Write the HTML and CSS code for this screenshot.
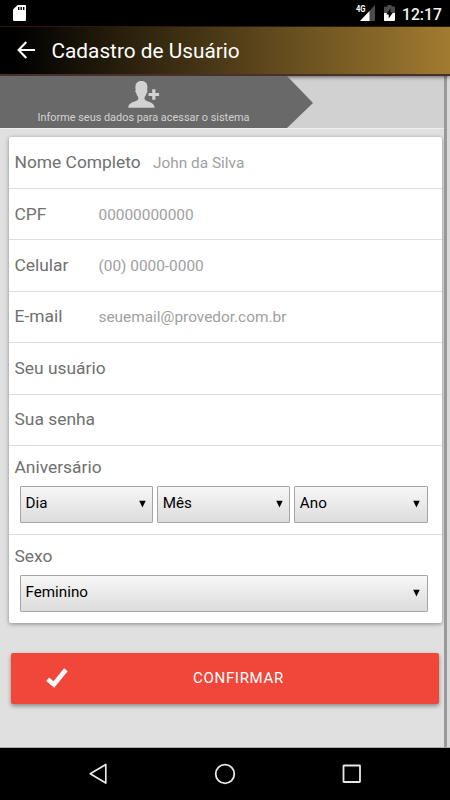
FILE: index.html
```html
<!DOCTYPE html>
<html lang="pt-BR">
<head>
<meta charset="utf-8">
<meta name="viewport" content="width=device-width, initial-scale=1">
<title>Cadastro de Usuário</title>
<link rel="stylesheet" href="styles.css">
</head>
<body>
<div class="phone">
  <div class="status">
    <svg class="sd" width="13" height="16" viewBox="0 0 13 16"><path fill="#fff" d="M4.600 0H12a1 1 0 0 1 1 1v14a1 1 0 0 1-1 1H1a1 1 0 0 1-1-1V4.600z"/><path fill="#000" d="M5 2h1.400v3H5zM7.500 2h1.400v3H7.500zM10 2h1.400v3H10z"/></svg>
    <svg class="signal" width="20" height="17" viewBox="0 0 20 17"><path fill="#4b4b4b" d="M19 1v16H4z"/><path fill="#fff" d="M13.500 6.900V17H4z"/><text class="network" x="0" y="8" textLength="9.500" lengthAdjust="spacingAndGlyphs">4G</text></svg>
    <svg class="battery" width="12" height="16" viewBox="0 0 12 16"><path fill="#4b4b4b" d="M3.500 0h4v1.500H10a1 1 0 0 1 1 1V8H0V2.500a1 1 0 0 1 1-1h2.500z"/><path fill="#fff" d="M0 8h11v7a1 1 0 0 1-1 1H1a1 1 0 0 1-1-1z"/><path fill="#000" d="M6.500 3.500v4H9L4.700 13.500v-4H2.200z"/></svg>
    <span class="clock">12:17</span>
  </div>

  <header class="toolbar">
    <svg class="back" width="18" height="18" viewBox="0 0 18 18"><path fill="none" stroke="#fff" stroke-width="2.100" d="M9.300 1L1.600 9l7.700 8M1.600 9H18"/></svg>
    <h1 class="title">Cadastro de Usuário</h1>
  </header>

  <main class="page">
    <div class="content">
      <div class="steps">
        <div class="step">
          <svg class="user-plus" width="32" height="27" viewBox="0 0 32 27"><path fill="#d2d2d2" d="M13.400 0c4 0 6 2.400 6 6 0 1.200-.1 2-.3 2.900.7.700.4 2.300-.5 3-.4 1.800-1.100 3.100-2 4v2.600c.7 1.700 9.900 2.800 9.900 7.500v.8H.3V26c0-4.700 9.200-5.800 9.900-7.500v-2.600c-.9-.9-1.600-2.200-2-4-.9-.7-1.200-2.300-.5-3A14 14 0 0 1 7.400 6c0-3.600 2-6 6-6z"/><path fill="#d2d2d2" d="M24.200 8.200h3.200v3.700h3.700v3.200h-3.700v3.700h-3.200v-3.700h-3.700v-3.200h3.700z"/></svg>
          <span class="step-text">Informe seus dados para acessar o sistema</span>
        </div>
      </div>

      <form class="card">
        <div class="row"><span class="label label-name">Nome Completo</span><span class="hint">John da Silva</span></div>
        <div class="row"><span class="label">CPF</span><span class="hint">00000000000</span></div>
        <div class="row"><span class="label">Celular</span><span class="hint">(00) 0000-0000</span></div>
        <div class="row"><span class="label">E-mail</span><span class="hint">seuemail@provedor.com.br</span></div>
        <div class="row"><span class="label">Seu usuário</span></div>
        <div class="row"><span class="label">Sua senha</span></div>
        <div class="group birthday">
          <span class="label">Aniversário</span>
          <div class="selects">
            <div class="select"><span>Dia</span><svg width="7" height="8" viewBox="0 0 7 8"><path d="M.2.700h6.500L3.450 7.400z"/></svg></div>
            <div class="select"><span>Mês</span><svg width="7" height="8" viewBox="0 0 7 8"><path d="M.2.700h6.500L3.450 7.400z"/></svg></div>
            <div class="select"><span>Ano</span><svg width="7" height="8" viewBox="0 0 7 8"><path d="M.2.700h6.500L3.450 7.400z"/></svg></div>
          </div>
        </div>
        <div class="group">
          <span class="label">Sexo</span>
          <div class="selects">
            <div class="select"><span>Feminino</span><svg width="7" height="8" viewBox="0 0 7 8"><path d="M.2.700h6.500L3.450 7.400z"/></svg></div>
          </div>
        </div>
      </form>

      <div class="confirm">
        <svg class="check" width="22" height="20" viewBox="0 0 22 20"><path fill="none" stroke="#fff" stroke-width="4.600" d="M1.700 11.200l6.200 5.200L19.900 1.700"/></svg>
        <span class="confirm-text">CONFIRMAR</span>
      </div>
    </div>
    <div class="scrollbar"></div>
  </main>

  <nav class="nav">
    <svg width="18" height="22" viewBox="0 0 18 22"><path fill="none" stroke="#e8e8e8" stroke-width="1.700" stroke-linejoin="round" d="M16.800 1.500v18.600L1.200 10.800z"/></svg>
    <svg width="22" height="22" viewBox="0 0 22 22"><circle cx="11" cy="11" r="9.300" fill="none" stroke="#e8e8e8" stroke-width="1.800"/></svg>
    <svg width="20" height="20" viewBox="0 0 20 20"><rect x="1.500" y="1.500" width="16.500" height="16.500" rx=".5" fill="none" stroke="#e8e8e8" stroke-width="1.800"/></svg>
  </nav>
</div>
</body>
</html>
```

FILE: styles.css
```css
* { box-sizing: border-box; }
body { margin: 0; font-family: Roboto, "Liberation Sans", sans-serif; }
svg { display: block; flex: none; }
.phone { width: 450px; height: 800px; display: flex; flex-direction: column; overflow: hidden; background: #000; }

.status { height: 26px; flex: none; display: flex; align-items: flex-start; background: #000; }
.sd { margin: 5px 0 0 13px; }
.signal { margin: 4px 0 0 330px; }
.network { font: 700 9px Roboto, sans-serif; fill: #fff; }
.battery { margin: 5px 0 0 8px; }
.clock { margin: 5px 0 0 6px; font-size: 15.700px; line-height: 19px; font-weight: 500; color: #f4f4f4; }

.toolbar { height: 50px; flex: none; display: flex; align-items: center; padding-left: 17px; border-top: 1px solid #2d1710; border-bottom: 2px solid #49302c; background: linear-gradient(90deg, #000 3%, #a17b30); box-shadow: 0 1px 4px rgba(0,0,0,.55); position: relative; }
.back { margin-bottom: 1px; }
.title { margin: 0 0 0 16.500px; font-size: 20.800px; line-height: 24px; font-weight: 400; color: #fff; white-space: nowrap; }

.page { flex: 1; min-height: 0; display: flex; background: #e0e0e0; border-bottom: 1px solid #aaa; }
.content { width: 444px; flex: none; }
.scrollbar { flex: 1; border-left: 3px solid #999; background: #dadada; }
.steps { height: 53px; background: #d1d1d1; border-bottom: 1px solid #eee; }
.step { width: 313px; height: 52px; padding: 5px 26px 0 0; display: flex; flex-direction: column; align-items: center; background: #696969; clip-path: polygon(0 0, 287px 0, 313px 27px, 287px 100%, 0 100%); }
.step-text { margin-top: 3px; font-size: 10.900px; line-height: 13px; color: #d2d2d2; white-space: nowrap; }

.card { width: 433px; height: 485.500px; margin: 8px 0 0 9px; padding-top: .7px; background: #fff; border-radius: 2px; box-shadow: 0 1px 4px rgba(0,0,0,.4); }
.row { height: 51.400px; padding: 0 0 1.400px 5.500px; display: flex; align-items: center; border-bottom: 1px solid #dedede; }
.label { width: 84px; font-size: 17.400px; line-height: 20px; color: #707070; white-space: nowrap; }
.label-name { width: 138.500px; }
.hint { padding-top: 2px; font-size: 15.400px; line-height: 18px; color: #a0a0a0; white-space: nowrap; }
.group { height: 88px; padding: 10.700px 14.500px 0 5.500px; }
.birthday { height: 89px; border-bottom: 1px solid #dedede; }
.group .label { display: block; }
.selects { display: flex; gap: 3.500px; margin: 9.300px 0 0 5px; }
.select { flex: 1; height: 37px; padding: 0 6.500px 0 5px; display: flex; align-items: center; justify-content: space-between; border: 1px solid #a5a5a5; border-radius: 1px; background: linear-gradient(#f7f7f7, #dcdcdc); font-size: 15.200px; line-height: 18px; color: #000; }
.select span { margin-bottom: 3px; }
.select svg { margin-bottom: 1px; }

.confirm { width: 428px; height: 51px; margin: 30.500px 0 0 11px; display: flex; align-items: center; background: #f1473a; border-radius: 2px; box-shadow: 0 2px 4px rgba(0,0,0,.4); }
.check { margin: 0 0 1px 35px; }
.confirm-text { margin: 0 0 1px 125px; font-size: 15px; line-height: 18px; letter-spacing: .7px; color: #fff; }

.nav { height: 52px; flex: none; display: flex; align-items: center; justify-content: space-between; padding: 0 88px 0 89px; background: #000; }
```
